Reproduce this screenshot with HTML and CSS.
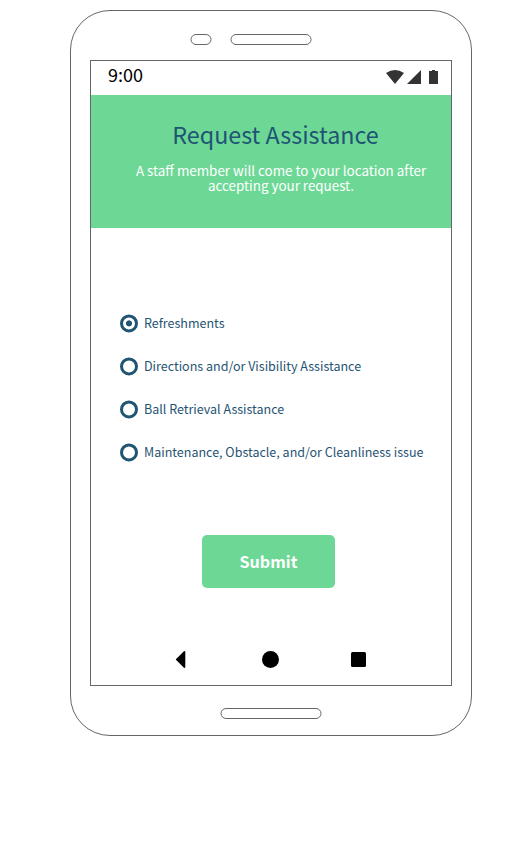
FILE: index.html
```html
<!DOCTYPE html>
<html lang="en">
<head>
<meta charset="utf-8">
<title>Request Assistance</title>
<link rel="stylesheet" href="styles.css">
</head>
<body>
<div class="phone">
  <svg class="sensors" width="122" height="11" viewBox="0 0 122 11" fill="none" stroke="#666">
    <rect x="1" y="0.5" width="20" height="10" rx="5"/>
    <rect x="41" y="0.5" width="80" height="10" rx="5"/>
  </svg>
  <main class="screen">
    <div class="status">
      <span class="time">9:00</span>
      <svg class="status-icons" width="54" height="16" viewBox="0 0 54 16" fill="#333">
        <path d="M0 4Q9-2 18 4L9 15Z"/>
        <path d="M35 1V15H21Z"/>
        <path d="M43 2H46V1H49V2H52V15H43Z"/>
      </svg>
    </div>
    <header class="header">
      <h1 class="title">Request Assistance</h1>
      <p class="subtitle">A staff member will come to your location after<br>accepting your request.</p>
    </header>
    <form class="form">
      <label class="option"><input class="radio" type="radio" name="kind" checked>Refreshments</label>
      <label class="option"><input class="radio" type="radio" name="kind">Directions and/or Visibility Assistance</label>
      <label class="option"><input class="radio" type="radio" name="kind">Ball Retrieval Assistance</label>
      <label class="option"><input class="radio" type="radio" name="kind">Maintenance, Obstacle, and/or Cleanliness issue</label>
      <button class="submit" type="button">Submit</button>
    </form>
    <nav class="nav">
      <svg width="192" height="18" viewBox="0 0 192 18">
        <path d="M1.7 8.5L9.5 0.9V16.1Z" stroke="#000" stroke-width="1.6" stroke-linejoin="round"/>
        <circle cx="95.5" cy="8.5" r="8.5"/>
        <rect x="176" y="1" width="15" height="15" rx="1.5"/>
      </svg>
    </nav>
  </main>
  <svg class="home" width="102" height="11" viewBox="0 0 102 11" fill="none" stroke="#666">
    <rect x="1" y="0.5" width="100" height="10" rx="5"/>
  </svg>
</div>
</body>
</html>
```

FILE: styles.css
```css
* { box-sizing: border-box; }
body {
  margin: 0;
  background: #fff;
  font-family: "Noto Sans CJK SC", "Noto Sans", sans-serif;
}
.phone {
  width: 402px;
  height: 726px;
  margin: 10px 0 0 70px;
  padding: 23px 19px 0;
  border: 1px solid #666;
  border-radius: 40px;
}
.sensors {
  display: block;
  margin: 0 0 15px 100px;
}
.screen {
  display: flex;
  flex-direction: column;
  width: 362px;
  height: 626px;
  border: 1px solid #666;
}
.status {
  display: flex;
  justify-content: space-between;
  height: 34px;
  padding: 0 11px 0 17px;
}
.time {
  font-size: 18px;
  line-height: 26px;
}
.status-icons { margin-top: 8px; }
.header {
  height: 133px;
  padding-top: 21px;
  background: #6dd896;
  text-align: center;
}
.title {
  margin: 0;
  padding-left: 9px;
  color: #1f5473;
  font-size: 23.3px;
  font-weight: 400;
  line-height: 36px;
}
.subtitle {
  margin: 11px 0 0;
  padding-left: 20px;
  color: #fff;
  font-size: 13.4px;
  line-height: 15px;
  white-space: nowrap;
}
.form {
  display: flex;
  flex-direction: column;
  gap: 23px;
  padding: 85px 0 0 29px;
}
.option {
  display: flex;
  align-items: center;
  gap: 6px;
  height: 20px;
  color: #1f5473;
  font-size: 12.53px;
  line-height: 20px;
  white-space: nowrap;
}
.radio {
  flex: none;
  width: 18px;
  height: 18px;
  margin: 0;
  border: 3px solid #1f5473;
  border-radius: 50%;
  appearance: none;
  transform: translateY(0.4px);
}
.radio:checked { background: radial-gradient(circle, #1f5473 2.6px, transparent 3.4px); }
.submit {
  width: 133px;
  height: 53px;
  margin: 50px 0 0 82px;
  padding: 0;
  border: 0;
  border-radius: 5px;
  background: #6dd896;
  color: #fff;
  font: 700 16.1px/53px "Noto Sans CJK SC", "Noto Sans", sans-serif;
}
.nav {
  display: flex;
  margin: 63px 0 0 84px;
}
.home {
  display: block;
  margin: 22px 0 0 130px;
}
```
